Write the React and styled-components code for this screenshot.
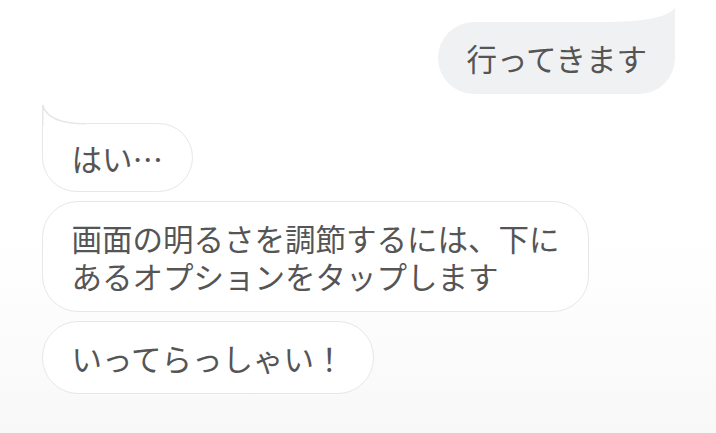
import React from "react";
import styled, { createGlobalStyle } from "styled-components";

const Global = createGlobalStyle`
  html, body { margin: 0; padding: 0; }
  body {
    width: 716px;
    height: 433px;
    overflow: hidden;
    background: linear-gradient(180deg, #ffffff 0%, #ffffff 55%, #f8f8f8 100%);
    font-family: "Noto Sans CJK JP", "Noto Sans", sans-serif;
  }
`;

const Chat = styled.div`
  display: flex;
  flex-direction: column;
  padding: 22px 41px 0 42px;
  box-sizing: border-box;
  width: 716px;
  height: 433px;
`;

const Group = styled.div`
  display: flex;
  flex-direction: column;
  align-items: flex-start;
  gap: 9px;
  margin-top: 29px;
`;

const Bubble = styled.div`
  position: relative;
  box-sizing: border-box;
  font-size: 30.5px;
  line-height: 38px;
  color: #555555;
  white-space: pre-line;
  border-radius: 36px;
`;

const Sent = styled(Bubble)`
  align-self: flex-end;
  background: #f0f1f3;
  padding: 17px 28px;
  border-top-right-radius: 0;
`;

const Received = styled(Bubble)`
  background: #ffffff;
  border: 1.5px solid #e7e7e7;
  padding: ${(p) => (p.$tail ? "14.5px" : "16.5px")} 28.5px;
  ${(p) => (p.$tail ? "border-top-left-radius: 0;" : "")}
`;

const TailSvg = styled.svg`
  position: absolute;
  display: block;
  overflow: visible;
`;

const SentTail = () => (
  <TailSvg
    width="72"
    height="15"
    viewBox="0 0 72 15"
    style={{ right: 0, top: -14 }}
  >
    <path d="M72,0 L72,15 L0,15 L0,14 C38,14 64,10 72,0 Z" fill="#f0f1f3" />
  </TailSvg>
);

const ReceivedTail = () => (
  <TailSvg
    width="44"
    height="21"
    viewBox="0 0 44 21"
    style={{ left: -1.5, top: -19.5 }}
  >
    <path d="M0.75,0 C4,13 18,18.75 44,18.75 L44,21 L0.75,21 Z" fill="#ffffff" />
    <path
      d="M0.75,21 L0.75,0 C4,13 18,18.75 44,18.75"
      fill="none"
      stroke="#e7e7e7"
      strokeWidth="1.5"
    />
  </TailSvg>
);

export default function App() {
  return (
    <>
      <Global />
      <Chat>
        <Sent>
          <SentTail />
          行ってきます
        </Sent>
        <Group>
          <Received $tail>
            <ReceivedTail />
            はい…
          </Received>
          <Received>
            {"画面の明るさを調節するには、下に\nあるオプションをタップします"}
          </Received>
          <Received>いってらっしゃい！</Received>
        </Group>
      </Chat>
    </>
  );
}
